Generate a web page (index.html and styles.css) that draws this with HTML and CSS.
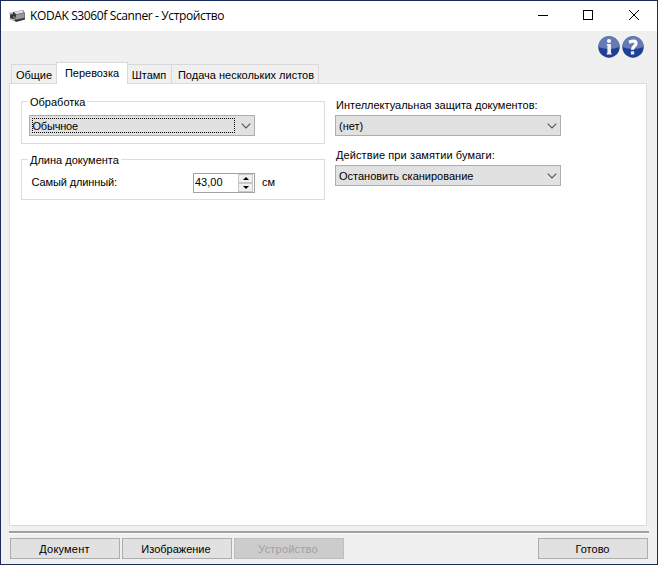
FILE: index.html
```
<!DOCTYPE html>
<html lang="ru">
<head>
<meta charset="utf-8">
<title>KODAK S3060f Scanner - Устройство</title>
<link rel="stylesheet" href="styles.css">
</head>
<body>
<div class="window">
  <header class="titlebar">
    <svg class="app-icon" width="17" height="14" viewBox="0 0 17 14">
      <path d="M0 4L5 3V5L1 6Z" fill="#aaa"/>
      <path d="M1 5.500L5 5L6 11L1 9.500Z" fill="#343434"/>
      <path d="M4 3L14 1L16 4V10L6 12L4 8Z" fill="#777"/>
      <path d="M5.500 3L13.500 1.500L14.500 3.500L7 5Z" fill="#e4e4e4"/>
      <path d="M4 3L7 5.500V8L4 7Z" fill="#333"/>
      <path d="M7 6L15 4.500V8.500L7 11Z" fill="#999"/>
      <path d="M0 9L6 10.500V12.500L1 11Z" fill="#c4c4c4"/>
      <path d="M5 11L16 9V10.500L7 13Z" fill="#333"/>
    </svg>
    <span class="title">KODAK S3060f Scanner - Устройство</span>
    <svg class="controls" width="104" height="11" viewBox="0 0 104 11" fill="none" stroke="#000" shape-rendering="crispEdges">
      <path d="M0 5.500H10M45.500 .5H54.500V9.500H45.500Z"/>
      <path d="M91 0L101 10M101 0L91 10" shape-rendering="auto"/>
    </svg>
  </header>
  <div class="help">
    <svg width="22" height="22" viewBox="0 0 22 22">
      <circle cx="11" cy="11" r="10.700" fill="#1e3f94"/>
      <path d="M.3 11A10.700 10.700 0 0 1 21.700 11Q11 15 .3 11Z" fill="#637cb6"/>
      <circle cx="11" cy="4.900" r="2" fill="#fff"/>
      <path d="M8.800 8H13V17H13.600V18.500H8.800V17H9.400V9.500H8.800Z" fill="#eef0f6"/>
    </svg>
    <svg width="22" height="22" viewBox="0 0 22 22">
      <circle cx="11" cy="11" r="10.700" fill="#1e3f94"/>
      <path d="M.3 11A10.700 10.700 0 0 1 21.700 11Q11 15 .3 11Z" fill="#637cb6"/>
      <path d="M7 6.200Q14 3.400 14 7.600C14 10.300 10.500 9.800 10.500 13.800" fill="none" stroke="#fff" stroke-width="3.300"/>
      <path d="M8.900 15.300H12.200V18.500H8.900Z" fill="#eef0f6"/>
    </svg>
  </div>
  <nav class="tabs">
    <div class="tab t1"><span>Общие</span></div>
    <div class="tab t2 active"><span>Перевозка</span></div>
    <div class="tab t3"><span>Штамп</span></div>
    <div class="tab t4"><span>Подача нескольких листов</span></div>
  </nav>
  <main class="panel">
    <section class="left">
      <fieldset class="group">
        <legend>Обработка</legend>
        <div class="select"><span class="focus">Обычное</span><svg class="chev" width="10" height="6" viewBox="0 0 10 6"><path d="M.7.700L5 5L9.300.700"/></svg></div>
      </fieldset>
      <fieldset class="group length">
        <legend>Длина документа</legend>
        <div class="row">
          <span class="row-label">Самый длинный:</span>
          <div class="spinner"><span class="value">43,00</span>
            <div class="steps"><i class="up"></i><i class="down"></i></div>
          </div>
          <span class="unit">см</span>
        </div>
      </fieldset>
    </section>
    <section class="right">
      <div class="label">Интеллектуальная защита документов:</div>
      <div class="select"><span>(нет)</span><svg class="chev" width="10" height="6" viewBox="0 0 10 6"><path d="M.7.700L5 5L9.300.700"/></svg></div>
      <div class="label second">Действие при замятии бумаги:</div>
      <div class="select"><span>Остановить сканирование</span><svg class="chev" width="10" height="6" viewBox="0 0 10 6"><path d="M.7.700L5 5L9.300.700"/></svg></div>
    </section>
  </main>
  <div class="rule"></div>
  <footer class="buttons">
    <div class="button wide-text"><span>Документ</span></div>
    <div class="button image"><span>Изображение</span></div>
    <div class="button disabled wide-text"><span>Устройство</span></div>
    <div class="button done"><span>Готово</span></div>
  </footer>
</div>
</body>
</html>
```
FILE: styles.css
```
* { box-sizing: border-box; }
body { margin: 0; }
.window {
  width: 658px; height: 565px;
  border: 1px solid #1b2c5b;
  background: #f0f0f0;
  color: #000;
  font: 11px/14px "Liberation Sans", sans-serif;
  white-space: nowrap;
  overflow: hidden;
}
.titlebar {
  height: 30px; background: #fff;
  display: flex; align-items: center;
  padding: 0 15px 0 8px;
}
.app-icon { margin-right: 4px; }
.title { font: 12px/16px "Open Sans", sans-serif; letter-spacing: -.38px; }
.controls { margin: -1px 0 0 auto; }
.help {
  height: 31px; padding: 5px 13px 0 0;
  display: flex; justify-content: flex-end; gap: 2px;
}
.tabs { height: 21px; padding-left: 10px; display: flex; align-items: flex-end; }
.tab {
  height: 19px; border: 1px solid #d9d9d9; border-bottom: 0;
  display: flex; align-items: center; justify-content: center;
  padding-top: 2px;
}
.t1 { width: 45px; border-right: 0; }
.t2 { width: 72px; }
.t3 { width: 43px; border-left: 0; border-right: 0; padding-right: 1px; }
.t4 { width: 148px; padding-left: 2px; }
.tab.active { height: 22px; margin-bottom: -1px; background: #fff; padding-bottom: 3px; z-index: 1; }
.panel {
  width: 638px; height: 443px; margin-left: 8px;
  border: 1px solid #dcdcdc; background: #fff;
  display: flex; padding: 11px 0 0 11px;
}
.left { width: 304px; }
.group {
  height: 49px; margin: 0; padding: 0 7px; min-width: 0;
  border: 1px solid #dcdcdc;
}
.group legend { height: 12px; line-height: 14px; padding: 0 2px; margin-left: -1px; }
.group.length { margin-top: 9px; height: 47px; }
.select {
  width: 226px; height: 21px; border: 1px solid #adadad; background: #e1e1e1;
  display: flex; align-items: center; justify-content: space-between;
  padding: 0 3px 0 3px;
}
.group .select { margin-top: 8px; padding-left: 2px; }
.focus { width: 203px; height: 15px; border: 1px dotted #000; line-height: 14px; letter-spacing: -.2px; text-indent: -.5px; }
.chev { fill: none; stroke: #555; stroke-width: 1.1; }
.row { display: flex; align-items: center; padding-left: 2px; height: 20px; margin-top: 8px; }
.row-label { width: 162px; letter-spacing: -.12px; padding: 0 0 2px .5px; }
.spinner {
  width: 62px; height: 20px; border: 1px solid #a0a0a5; background: #fff;
  display: flex; justify-content: space-between; padding: 0 1px;
}
.value { line-height: 17px; }
.steps { width: 15px; display: grid; grid-template-rows: 9px 9px; }
.steps i { border: 1px solid #c8c8c8; background: #f0f0f0; display: flex; align-items: center; justify-content: center; }
.steps i::before { content: ""; border: 3px solid transparent; }
.steps .up::before { border-top: 0; border-bottom-color: #000; }
.steps .down::before { border-bottom: 0; border-top-color: #000; }
.unit { margin-left: 7px; padding-bottom: 2px; }
.right { margin-left: 10px; padding-top: 3px; }
.label { height: 17px; padding-left: 1px; }
.label.second { margin-top: 12px; letter-spacing: .1px; }
.rule { width: 640px; height: 3px; margin: 5px 0 0 8px; border-top: 2px solid #a0a0a0; border-bottom: 1px solid #fff; }
.buttons { display: flex; gap: 2px; padding: 4px 9px 0; }
.button {
  width: 110px; height: 21px; border: 1px solid #adadad; background: #e1e1e1;
  display: flex; align-items: center; justify-content: center;
  padding-right: 1px;
}
.button.image { padding-right: 2px; }
.button.wide-text { letter-spacing: .2px; }
.button.disabled { background: #ccc; border-color: #bfbfbf; color: #a0a0a0; padding-right: 2px; }
.button.done { margin-left: auto; }
```
